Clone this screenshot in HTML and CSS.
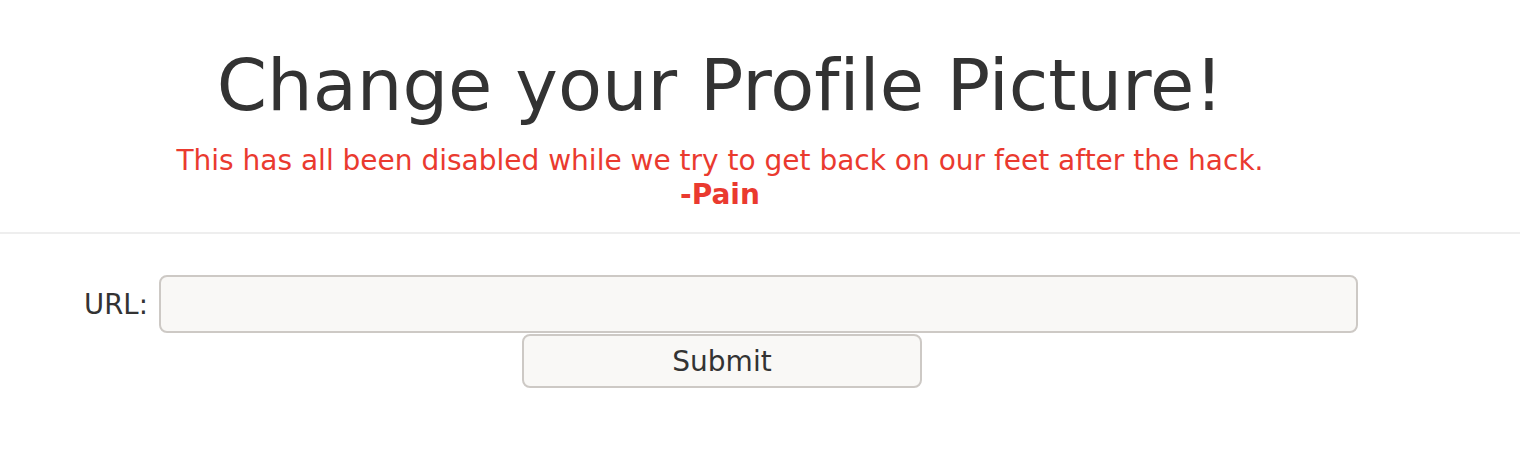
FILE: index.html
```html
<!DOCTYPE html>
<html>
<head>
<meta charset="utf-8">
<link rel="stylesheet" href="styles.css">
</head>
<body>
<header class="hero">
  <div class="wrap">
    <h1 class="title">Change your Profile Picture!</h1>
    <p class="notice">This has all been disabled while we try to get back on our feet after the hack.<br><strong>-Pain</strong></p>
  </div>
</header>
<main class="wrap">
  <form class="form">
    <div class="row">
      <label class="label" for="url">URL:</label>
      <input class="input" id="url" type="text">
    </div>
    <button class="btn" type="button">Submit</button>
  </form>
</main>
</body>
</html>
```
FILE: styles.css
```css
html, body {
  margin: 0;
  padding: 0;
  background: #fff;
  font-family: "DejaVu Sans", sans-serif;
  color: #333;
  font-variant-ligatures: none;
}
.wrap {
  width: 1440px;
}
.hero {
  border-bottom: 2px solid #eeeeee;
  padding: 40px 0 20px;
}
.title {
  margin: 0;
  text-align: center;
  font-weight: normal;
  font-size: 72px;
  line-height: 90px;
  color: #333;
}
.notice {
  margin: 14px 0 0;
  text-align: center;
  color: #ea3a2f;
  font-size: 28px;
  line-height: 34px;
}
.notice strong {
  font-weight: bold;
}
.form {
  display: flex;
  flex-direction: column;
  align-items: center;
  padding-top: 41px;
}
.row {
  display: flex;
  align-items: center;
  gap: 11px;
  padding-left: 2px;
}
.label {
  font-size: 27.5px;
  color: #333;
}
.input {
  box-sizing: border-box;
  width: 1199px;
  height: 58px;
  border: 2px solid #cdc9c5;
  border-radius: 8px;
  background: #f9f8f6;
  margin: 0;
}
.btn {
  box-sizing: border-box;
  margin: 1px 0 0 4px;
  width: 400px;
  height: 54px;
  border: 2px solid #cdc9c5;
  border-radius: 8px;
  background: #f9f8f6;
  font-family: "DejaVu Sans", sans-serif;
  font-size: 28px;
  color: #333;
  padding: 0;
}
```
